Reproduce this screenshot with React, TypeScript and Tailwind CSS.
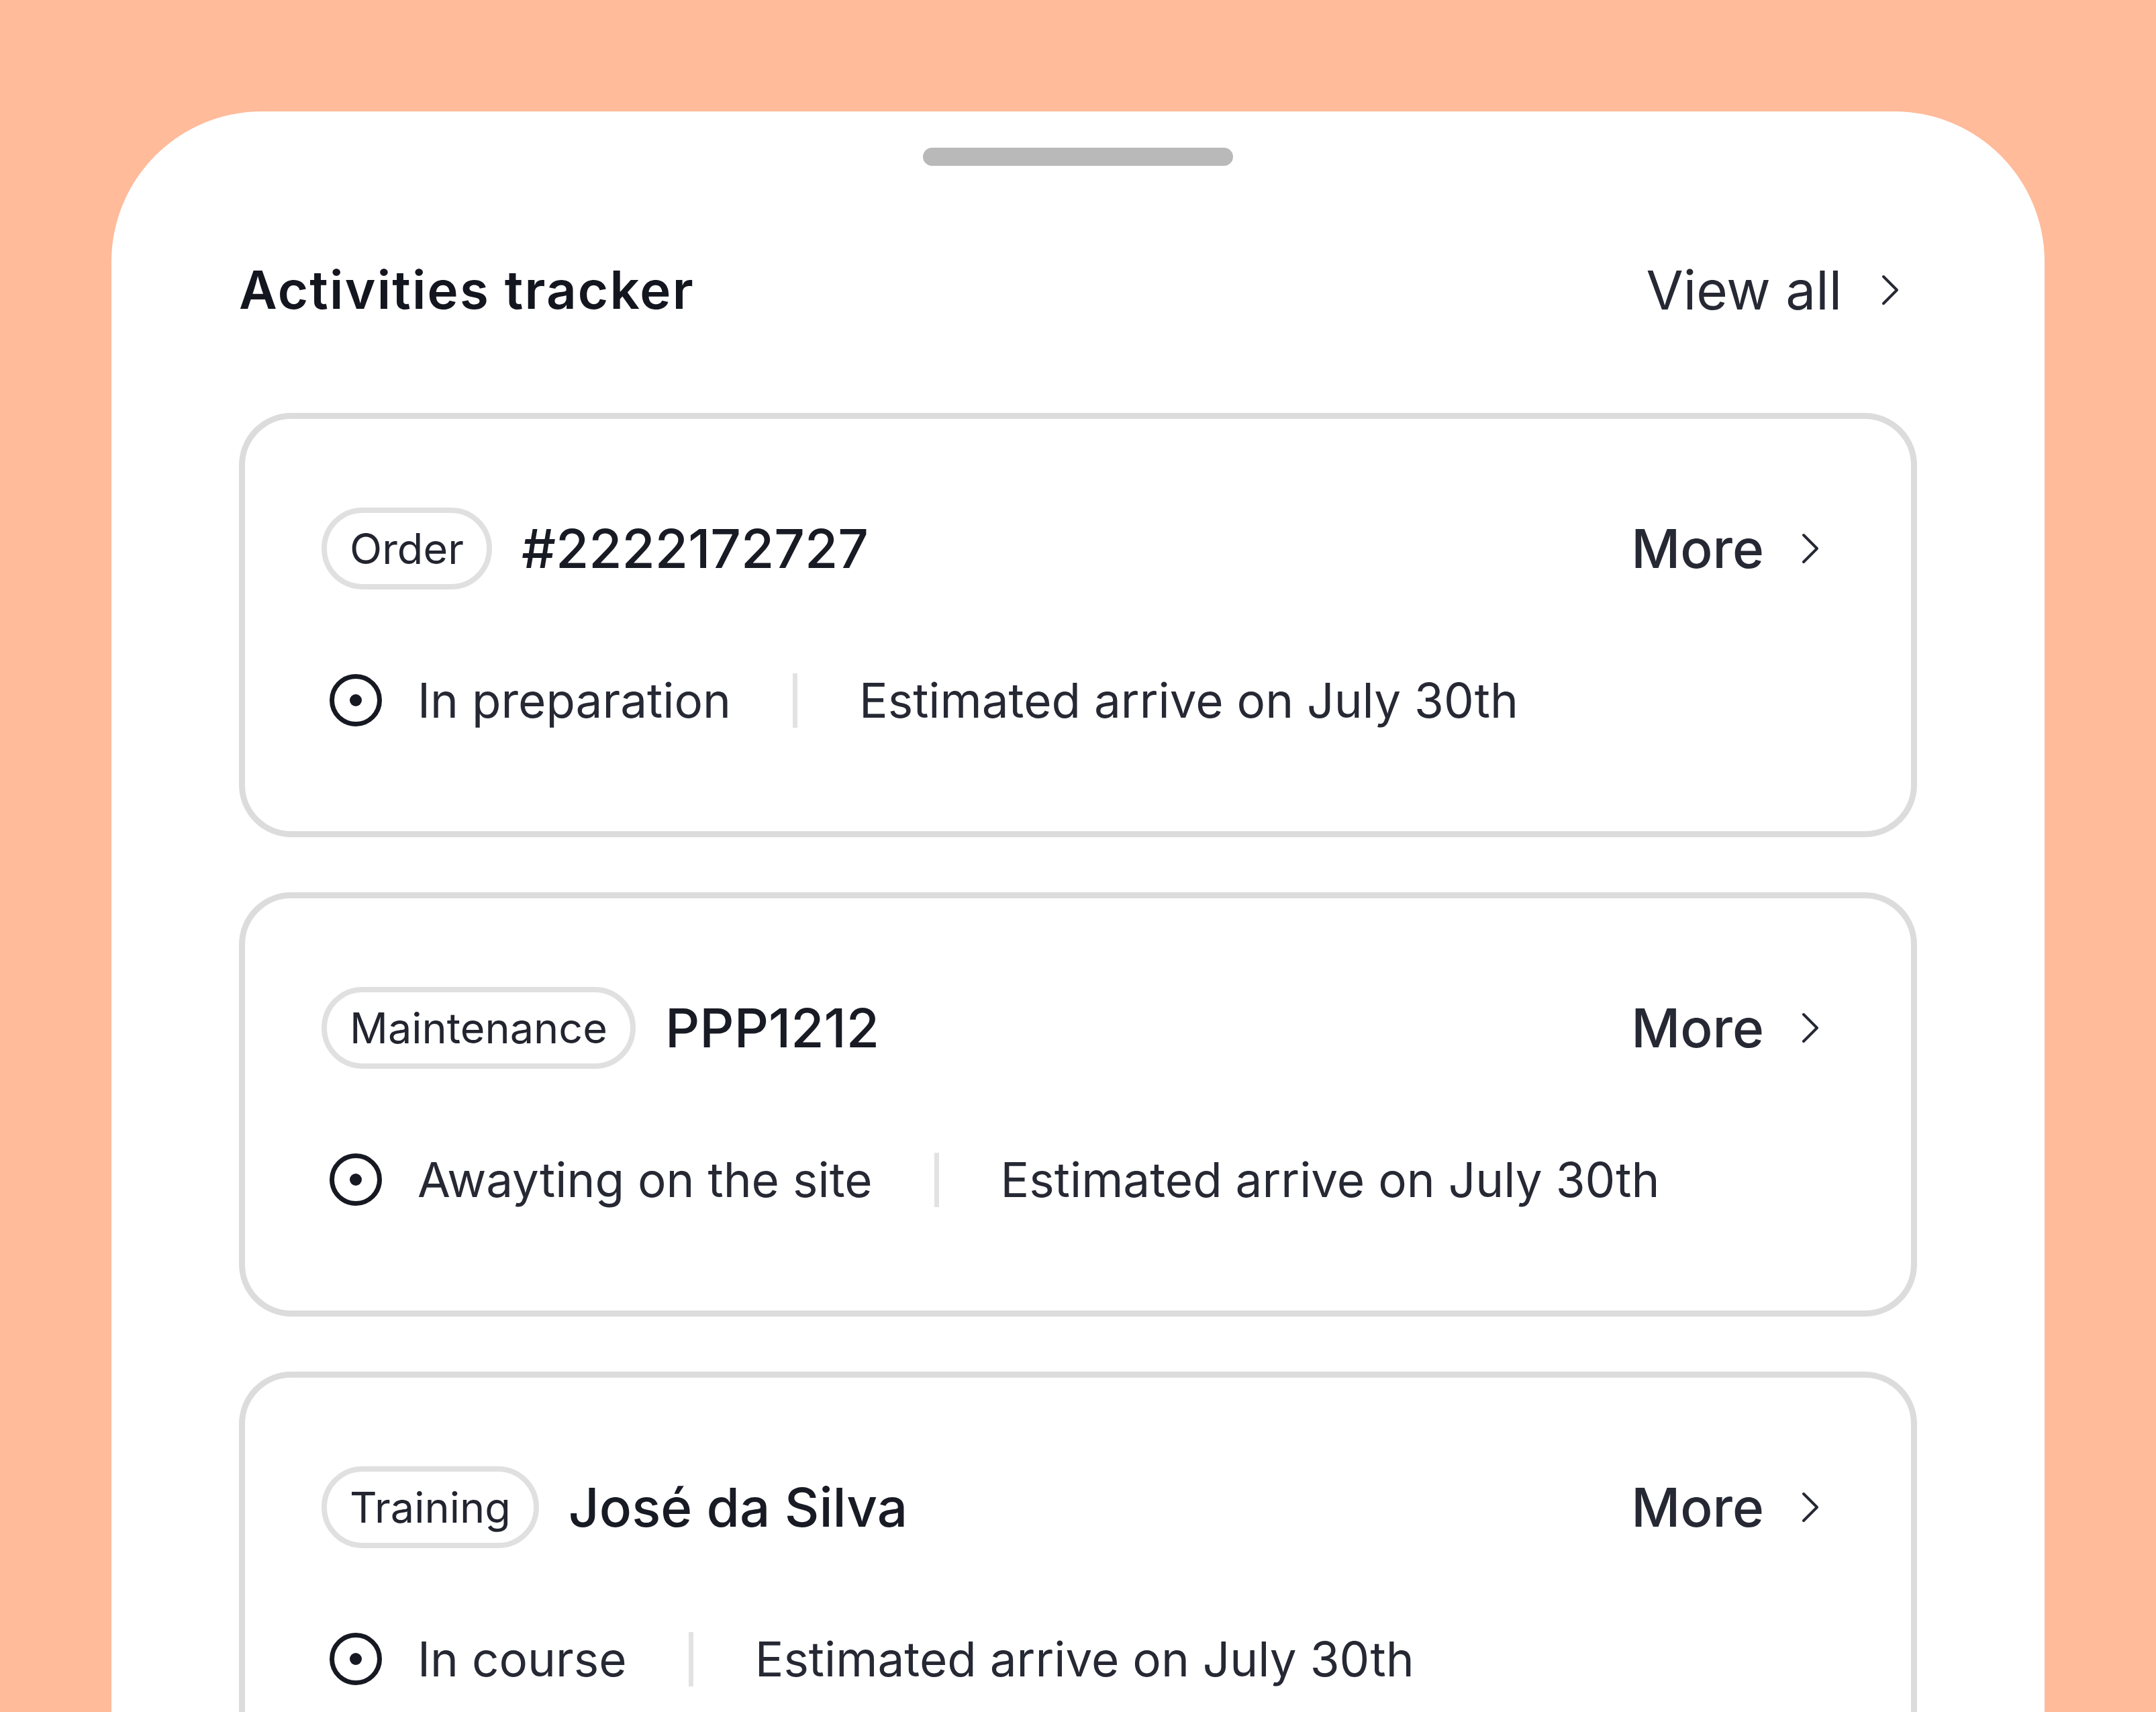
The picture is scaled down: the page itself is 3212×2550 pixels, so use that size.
import React from "react";

function Chevron() {
  return (
    <svg width="80" height="80" viewBox="0 0 24 24" fill="none" stroke="#262833" strokeWidth="1.2" strokeLinecap="round" strokeLinejoin="round" className="shrink-0">
      <path d="m9 18 6-6-6-6" />
    </svg>
  );
}

function StatusIcon() {
  return (
    <svg width="78" height="78" viewBox="0 0 78 78" fill="none" className="ml-[12px] shrink-0">
      <circle cx="39" cy="39" r="35.5" stroke="#171922" strokeWidth="7" />
      <circle cx="39" cy="39" r="9" fill="#171922" />
    </svg>
  );
}

type Item = { tag: string; title: string; status: string };

const items: Item[] = [
  { tag: "Order", title: "#2222172727", status: "In preparation" },
  { tag: "Maintenance", title: "PPP1212", status: "Awayting on the site" },
  { tag: "Training", title: "José da Silva", status: "In course" },
];

function Card({ item }: { item: Item }) {
  return (
    <div className="shrink-0 rounded-[78px] border-[9px] border-[#dcdcdc] bg-white pl-[114px] pr-[110px] pt-[132px] pb-[155px]">
      <div className="flex h-[122px] items-center justify-between">
        <div className="flex items-center">
          <div className="flex h-[122px] items-center rounded-full border-[8px] border-[#e0e0e0] px-[34px] text-[63px] leading-none text-[#22242f]">
            {item.tag}
          </div>
          <div className="ml-[44px] text-[80px] font-medium leading-none text-[#181a24]">{item.title}</div>
        </div>
        <div className="flex items-center gap-[29px]">
          <span className="text-[80px] font-medium leading-none text-[#262833]">More</span>
          <Chevron />
        </div>
      </div>
      <div className="mt-[125px] flex h-[80px] items-center text-[71px] leading-none text-[#262833]">
        <StatusIcon />
        <span className="ml-[53px]">{item.status}</span>
        <div className="mx-[92px] h-[81px] w-[7px] bg-[#e2e2e2]" />
        <span>Estimated arrive on July 30th</span>
      </div>
    </div>
  );
}

export default function App() {
  return (
    <div
      className="h-[2550px] w-[3212px] overflow-hidden bg-[#ffbb9a] px-[166px] pt-[166px]"
      style={{ fontFamily: "Inter, 'Noto Sans', sans-serif" }}
    >
      <div className="h-[2600px] rounded-t-[224px] bg-white px-[190px] pt-[54px]">
        <div className="mx-auto h-[27px] w-[462px] rounded-full bg-[#b9b9b9]" />
        <div className="mt-[145px] flex h-[80px] items-center justify-between">
          <h1 className="text-[78px] font-semibold leading-none tracking-[0.028em] text-[#14161f]">Activities tracker</h1>
          <div className="flex items-center gap-[32px]">
            <span className="text-[80px] leading-none text-[#262833]">View all</span>
            <Chevron />
          </div>
        </div>
        <div className="mt-[143px] flex flex-col gap-[82px]">
          {items.map((it) => (
            <Card key={it.tag} item={it} />
          ))}
        </div>
      </div>
    </div>
  );
}
